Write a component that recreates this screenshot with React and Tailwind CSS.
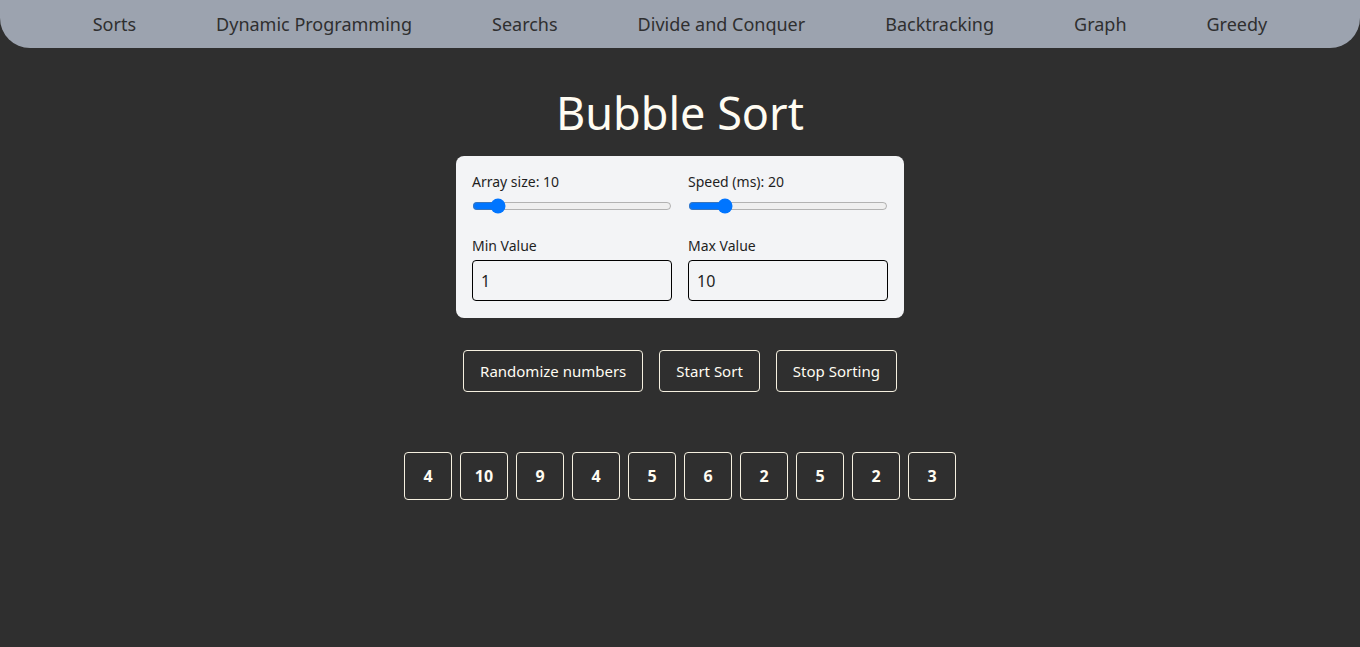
import React, { useState } from 'react';

const NAV = ['Sorts', 'Dynamic Programming', 'Searchs', 'Divide and Conquer', 'Backtracking', 'Graph', 'Greedy'];

const App = () => {
  const [size, setSize] = useState(10);
  const [speed, setSpeed] = useState(20);
  const [min, setMin] = useState('1');
  const [max, setMax] = useState('10');
  const nums = [4, 10, 9, 4, 5, 6, 2, 5, 2, 3];

  return (
    <div className="min-h-[647px] bg-[#2f2f2f] font-['Noto_Sans',sans-serif]">
      {/* Top nav */}
      <nav className="h-12 bg-[#9ca3af] rounded-b-[30px] flex items-center justify-center gap-[80px] text-[18px] text-[#2f2f2f]">
        {NAV.map((n) => (
          <a key={n} className="cursor-pointer">{n}</a>
        ))}
      </nav>

      <h1 className="mt-[35px] text-center text-[45px] leading-[60px] text-[#fffcf2]">Bubble Sort</h1>

      {/* Controls */}
      <div className="mx-auto mt-[13px] w-[448px] rounded-lg bg-[#f3f4f6] px-4 pt-4 pb-[17px] grid grid-cols-2 gap-x-4 text-[#1f1f1f]">
        <div>
          <label className="block text-sm">Array size: {size}</label>
          <input type="range" min="0" max="100" value={size} onChange={(e) => setSize(e.target.value)} className="mt-[6px] w-full accent-[#0075ff]" />
        </div>
        <div>
          <label className="block text-sm">Speed (ms): {speed}</label>
          <input type="range" min="0" max="125" value={speed} onChange={(e) => setSpeed(e.target.value)} className="mt-[6px] w-full accent-[#0075ff]" />
        </div>
        <div className="mt-4">
          <label className="block text-sm">Min Value</label>
          <input value={min} onChange={(e) => setMin(e.target.value)} className="mt-[4px] h-[41px] w-full rounded border border-black px-2 text-base outline-none" />
        </div>
        <div className="mt-4">
          <label className="block text-sm">Max Value</label>
          <input value={max} onChange={(e) => setMax(e.target.value)} className="mt-[4px] h-[41px] w-full rounded border border-black px-2 text-base outline-none" />
        </div>
      </div>

      {/* Buttons */}
      <div className="mt-8 flex justify-center gap-4">
        {['Randomize numbers', 'Start Sort', 'Stop Sorting'].map((b) => (
          <button key={b} className="h-[42px] rounded border border-[#f5f0e0] px-4 text-[15px] text-[#fffcf2]">{b}</button>
        ))}
      </div>

      {/* Array */}
      <div className="mt-[60px] flex justify-center gap-2">
        {nums.map((n, i) => (
          <div key={i} className="w-12 h-12 flex items-center justify-center rounded border border-[#f5f0e0] text-base font-bold text-[#fffcf2]">
            {n}
          </div>
        ))}
      </div>
    </div>
  );
};

export default App;
